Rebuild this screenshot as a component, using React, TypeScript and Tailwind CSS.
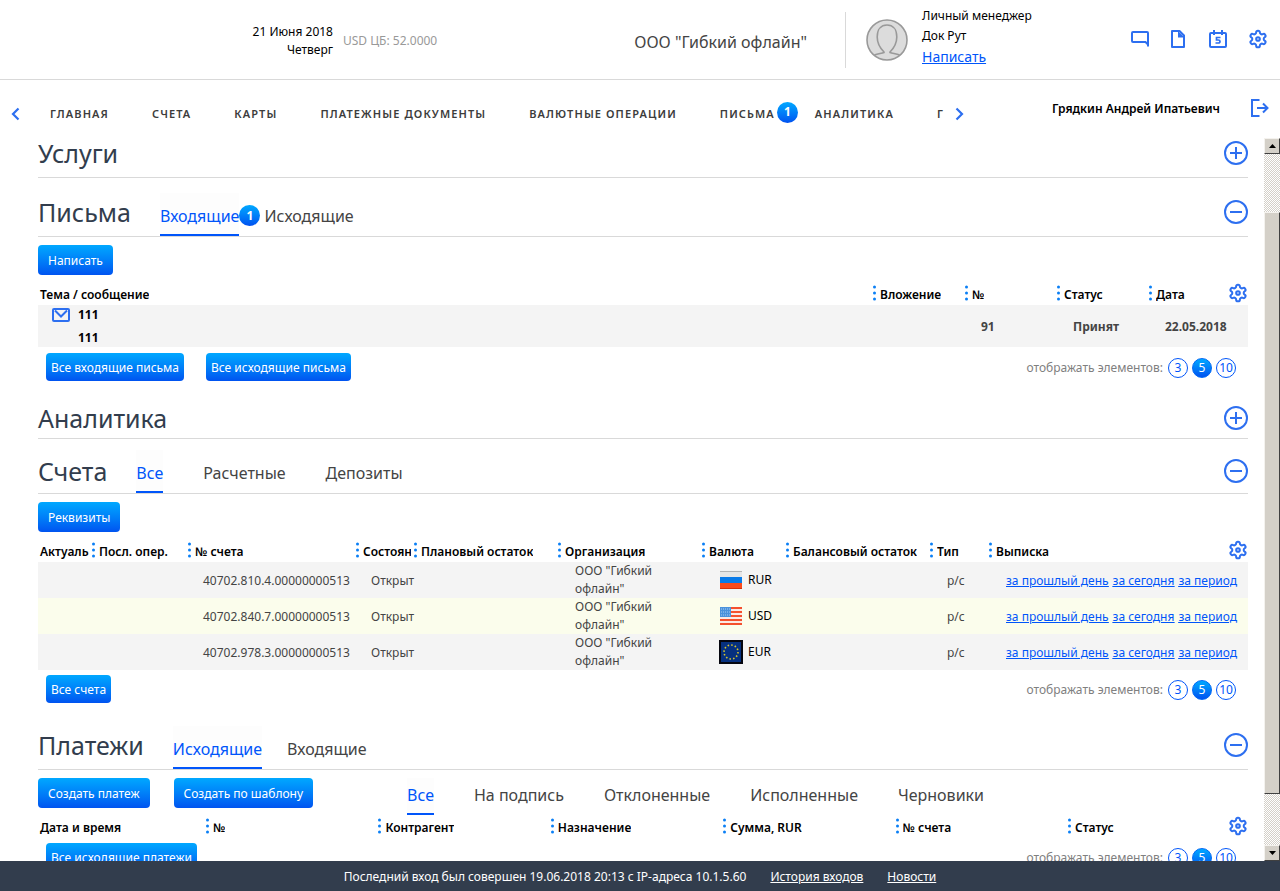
import type { ReactNode } from "react";

const pageSizes = [3, 5, 10];

const menu = [
	{ title: "ГЛАВНАЯ" },
	{ title: "СЧЕТА" },
	{ title: "КАРТЫ" },
	{ title: "ПЛАТЕЖНЫЕ ДОКУМЕНТЫ" },
	{ title: "ВАЛЮТНЫЕ ОПЕРАЦИИ" },
	{ title: "ПИСЬМА", count: 1 },
	{ title: "АНАЛИТИКА" },
	{ title: "Г" },
];

const accounts = [
	{ number: "40702.810.4.00000000513", currency: "RUR" },
	{ number: "40702.840.7.00000000513", currency: "USD" },
	{ number: "40702.978.3.00000000513", currency: "EUR" },
];

const accountColumns = [
	{ title: "Актуальность", width: "w-[54px]" },
	{ title: "Посл. опер.", width: "w-24" },
	{ title: "№ счета", width: "w-[168px]" },
	{ title: "Состояние", width: "w-[58px]" },
	{ title: "Плановый остаток", width: "w-36" },
	{ title: "Организация", width: "w-36" },
	{ title: "Валюта", width: "w-[84px]" },
	{ title: "Балансовый остаток", width: "w-36" },
	{ title: "Тип", width: "w-[59px]" },
	{ title: "Выписка", width: "" },
];

const letterColumns = [
	{ title: "Тема / сообщение", width: "" },
	{ title: "Вложение", width: "w-[92px]" },
	{ title: "№", width: "w-[92px]" },
	{ title: "Статус", width: "w-[92px]" },
	{ title: "Дата", width: "w-[99px]" },
];

const paymentColumns = [
	{ title: "Дата и время", width: "w-[168px]" },
	{ title: "№", width: "" },
	{ title: "Контрагент", width: "" },
	{ title: "Назначение", width: "" },
	{ title: "Сумма, RUR", width: "" },
	{ title: "№ счета", width: "" },
	{ title: "Статус", width: "w-[180px]" },
];

const GearIcon = () => (
	<svg width="20" height="20" viewBox="0 0 24 24" fill="none" stroke="#2d6ff0" strokeWidth="2.4">
		<path d="M12.22 2h-.44a2 2 0 0 0-2 2v.18a2 2 0 0 1-1 1.73l-.43.25a2 2 0 0 1-2 0l-.15-.08a2 2 0 0 0-2.73.73l-.22.38a2 2 0 0 0 .73 2.73l.15.1a2 2 0 0 1 1 1.72v.51a2 2 0 0 1-1 1.74l-.15.09a2 2 0 0 0-.73 2.73l.22.38a2 2 0 0 0 2.73.73l.15-.08a2 2 0 0 1 2 0l.43.25a2 2 0 0 1 1 1.73V20a2 2 0 0 0 2 2h.44a2 2 0 0 0 2-2v-.18a2 2 0 0 1 1-1.73l.43-.25a2 2 0 0 1 2 0l.15.08a2 2 0 0 0 2.73-.73l.22-.39a2 2 0 0 0-.73-2.73l-.15-.08a2 2 0 0 1-1-1.74v-.5a2 2 0 0 1 1-1.74l.15-.09a2 2 0 0 0 .73-2.73l-.22-.38a2 2 0 0 0-2.73-.73l-.15.08a2 2 0 0 1-2 0l-.43-.25a2 2 0 0 1-1-1.73V4a2 2 0 0 0-2-2z" />
		<circle cx="12" cy="12" r="2.2" />
	</svg>
);

const ChatIcon = () => (
	<svg width="20" height="20" viewBox="0 0 20 20" fill="none" stroke="#2d6ff0" strokeWidth="2">
		<path d="M18 17.5V4a1 1 0 0 0-1-1H3a1 1 0 0 0-1 1v8a1 1 0 0 0 1 1h12.500L18 15.500" />
	</svg>
);

const FileIcon = () => (
	<svg width="20" height="20" viewBox="0 0 20 20" fill="none" stroke="#2d6ff0" strokeWidth="2">
		<path d="M4 2h7.500L16 6.500V18H4z" strokeLinejoin="round" />
		<path d="M10 2v6.500h6.500z" fill="#2d6ff0" stroke="none" />
	</svg>
);

const CalendarIcon = () => (
	<svg width="20" height="20" viewBox="0 0 20 20" fill="none" stroke="#2d6ff0" strokeWidth="2">
		<rect x="2" y="4" width="16" height="14" rx="1" />
		<path d="M6 1v5M14 1v5" />
		<path d="M12.500 8.500h-4v2.500h2a1.500 1.500 0 0 1 0 3h-3" strokeWidth="1.700" />
	</svg>
);

const LogoutIcon = () => (
	<svg width="20" height="20" viewBox="0 0 20 20" fill="none" stroke="#2d6ff0" strokeWidth="2">
		<path d="M9.500 2H2v16h7.500M7 10h11M13 5.500l4.500 4.500-4.500 4.500" />
	</svg>
);

const MailIcon = () => (
	<svg width="18" height="14" viewBox="0 0 18 14" fill="none" stroke="#2d6ff0" strokeWidth="2">
		<rect x="1" y="1" width="16" height="12" rx="1" />
		<path d="m3 2.500 6 6 6-6" />
	</svg>
);

const Chevron = ({ d }: { d: string }) => (
	<svg width="9" height="14" viewBox="0 0 9 14" fill="none" stroke="#2d6ff0" strokeWidth="2.2">
		<path d={d} />
	</svg>
);

const Avatar = () => (
	<svg width="42" height="42" viewBox="0 0 42 42" fill="none" stroke="#999" strokeWidth="1.600">
		<circle cx="21" cy="21" r="20" fill="#dcdcdc" />
		<path d="M8.500 36c3.500-1.700 7-1.300 9.500-2.500v-.5c-4-4-6.800-8.500-6.800-15C11.200 10.500 15 6 21 6s9.800 4.500 9.800 12c0 6.500-2.800 11-6.800 15v.5c2.500 1.200 6 .8 9.500 2.500" />
	</svg>
);

const Flag = ({ currency }: { currency: string }) => {
	if (currency === "RUR") {
		return (
			<svg className="mx-px" width="22" height="18" viewBox="0 0 22 18">
				<rect width="22" height="6" fill="#e6e6e6" />
				<rect y="6" width="22" height="6" fill="#0a7be8" />
				<rect y="12" width="22" height="6" fill="#fb4a1c" />
				<path d="M0 .5h22" stroke="#b4b4b4" />
				<path d="M0 17.500h22" stroke="#d83208" />
			</svg>
		);
	}
	if (currency === "USD") {
		return (
			<svg className="mx-px" width="22" height="18" viewBox="0 0 22 18">
				<rect width="22" height="18" fill="#fbe9e5" />
				<path d="M0 1h22M0 5h22M0 9h22M0 13h22M0 17h22" stroke="#f4502e" strokeWidth="2" />
				<rect width="11" height="10" fill="#4b92dc" />
				<path d="M1 2h10M1 5h10M1 8h10" stroke="#a9cdf2" strokeDasharray="1 1" />
			</svg>
		);
	}
	return (
		<svg width="24" height="24" viewBox="0 0 24 24">
			<rect width="24" height="24" fill="#05060f" />
			<rect x="2" y="2" width="20" height="20" fill="#06307f" />
			<circle cx="12" cy="12" r="7" fill="none" stroke="#d8c62c" strokeWidth="1.600" strokeDasharray="1.500 2.165" />
		</svg>
	);
};

const Badge = ({ children }: { children: ReactNode }) => (
	<span className="flex size-[21px] shrink-0 items-center justify-center rounded-full bg-linear-to-b from-[#00a8ff] to-[#0050f0] text-xs font-bold tracking-normal text-white">
		{children}
	</span>
);

const ActionButton = ({ children, small }: { children: ReactNode; small?: boolean }) => (
	<button
		className={`cursor-pointer rounded-sm bg-linear-to-b from-[#00a8ff] to-[#0053f0] pt-0.5 text-xs whitespace-nowrap text-white ${
			small ? "h-7 px-[5px]" : "h-[30px] px-[10px]"
		}`}>
		{children}
	</button>
);

const Tab = ({ children, active, sub }: { children: ReactNode; active?: boolean; sub?: boolean }) => (
	<button
		className={`flex h-full cursor-pointer items-center border-b-2 text-base whitespace-nowrap ${sub ? "pb-0.5" : "pt-1"} ${
			active ? "border-[#0055fa] bg-[#fdfdfd] text-[#0055fa]" : "border-transparent text-[#444]"
		}`}>
		{children}
	</button>
);

type SectionHeadProps = { title: string; open?: boolean; size: string; lift: string; children?: ReactNode };

const SectionHead = ({ title, open, size, lift, children }: SectionHeadProps) => (
	<div className={`flex items-center border-b border-[#d9d9d9] ${size}`}>
		<h2 className={`mr-[29px] text-[25px] leading-7 text-[#323d4d] ${lift}`}>{title}</h2>
		{children}
		<button className={`ml-auto cursor-pointer ${lift}`} aria-label={title}>
			<svg width="24" height="24" viewBox="0 0 24 24" fill="none" stroke="#2d6ff0" strokeWidth="2">
				<circle cx="12" cy="12" r="11" />
				<path d={open ? "M6 12h12" : "M6 12h12M12 6v12"} />
			</svg>
		</button>
	</div>
);

const TableHead = ({ columns }: { columns: { title: string; width: string }[] }) => (
	<thead>
		<tr className="h-6">
			{columns.map((column, i) => (
				<th key={column.title} className={`p-0 text-left text-xs font-semibold text-black ${column.width}`}>
					<div className="flex items-center">
						{i > 0 && (
							<svg className="mr-1 shrink-0" width="3" height="16" viewBox="0 0 3 16" fill="#0a7ff5">
								<circle cx="1.500" cy="2" r="1.500" />
								<circle cx="1.500" cy="8" r="1.500" />
								<circle cx="1.500" cy="14" r="1.500" />
							</svg>
						)}
						<span className={`mr-[3px] overflow-hidden pt-[3px] whitespace-nowrap ${i > 0 ? "" : "pl-0.5"}`}>{column.title}</span>
						{i === columns.length - 1 && (
							<button className="ml-auto cursor-pointer" aria-label="Настройки">
								<GearIcon />
							</button>
						)}
					</div>
				</th>
			))}
		</tr>
	</thead>
);

const Pager = () => (
	<div className="ml-auto flex items-center gap-1 pt-0.5 pr-3 text-xs text-[#808080]">
		<span className="mr-px">отображать элементов:</span>
		{pageSizes.map((size) => (
			<button
				key={size}
				className={`flex size-5 cursor-pointer items-center justify-center rounded-full border ${
					size === 5 ? "border-[#0068f5] bg-linear-to-b from-[#00a8ff] to-[#0050f0] text-white" : "border-[#0055fa] text-[#0055fa]"
				}`}>
				{size}
			</button>
		))}
	</div>
);

const Header = () => (
	<header className="flex h-20 shrink-0 items-center border-b border-[#d9d9d9] text-xs">
		<div className="w-[333px] shrink-0 pt-0.5 text-right leading-[18px] text-black">
			<p>21 Июня 2018</p>
			<p>Четверг</p>
		</div>
		<span className="ml-[10px] pt-0.5 text-[#999]">USD ЦБ: 52.0000</span>
		<span className="mr-[38px] ml-auto pt-1 text-base text-[#444]">ООО "Гибкий офлайн"</span>
		<div className="flex h-14 w-[435px] shrink-0 items-center border-l border-[#d9d9d9] pr-3 pl-5">
			<Avatar />
			<div className="ml-[14px] pb-1.5 text-black">
				<p className="leading-5">Личный менеджер</p>
				<p className="leading-5">Док Рут</p>
				<a href="#write" className="block text-sm leading-[22px] text-[#0055fa] underline">
					Написать
				</a>
			</div>
			<div className="ml-auto flex items-center gap-5 pb-0.5">
				<button className="-mr-0.5 cursor-pointer" aria-label="Сообщения">
					<ChatIcon />
				</button>
				<button className="cursor-pointer" aria-label="Документы">
					<FileIcon />
				</button>
				<button className="cursor-pointer" aria-label="Календарь">
					<CalendarIcon />
				</button>
				<button className="cursor-pointer" aria-label="Настройки">
					<GearIcon />
				</button>
			</div>
		</div>
	</header>
);

const Menu = () => (
	<div className="flex h-[58px] shrink-0 items-center">
		<button className="w-[50px] shrink-0 cursor-pointer pt-2.5 pl-[11px]" aria-label="Назад">
			<Chevron d="M7.500 1.500 2 7l5.500 5.500" />
		</button>
		<nav className="flex h-full min-w-0 flex-1 items-center gap-[43px] overflow-hidden pt-2.5">
			{menu.map((item) => (
				<a key={item.title} href="#menu" className="flex shrink-0 items-center text-[11px] font-semibold tracking-widest text-[#3c3c3c]">
					{item.title}
					{item.count && (
						<span className="-mr-[26px] pb-1 pl-0.5">
							<Badge>{item.count}</Badge>
						</span>
					)}
				</a>
			))}
		</nav>
		<div className="flex w-[336px] shrink-0 items-center pr-[10px] pl-[11px]">
			<button className="cursor-pointer pt-2.5" aria-label="Вперед">
				<Chevron d="M1.500 1.500 7 7l-5.500 5.500" />
			</button>
			<span className="ml-auto text-xs font-semibold text-black">Грядкин Андрей Ипатьевич</span>
			<button className="ml-[30px] cursor-pointer pb-0.5" aria-label="Выход">
				<LogoutIcon />
			</button>
		</div>
	</div>
);

const Letters = () => (
	<section className="pt-[15px]">
		<SectionHead title="Письма" open size="h-11" lift="pb-1.5">
			<div className="flex h-full items-center gap-1">
				<div className="flex h-full items-center">
					<Tab active>Входящие</Tab>
					<span className="pt-0.5">
						<Badge>1</Badge>
					</span>
				</div>
				<Tab>Исходящие</Tab>
			</div>
		</SectionHead>
		<div className="pt-2 pb-1.5">
			<ActionButton>Написать</ActionButton>
		</div>
		<table className="w-full table-fixed text-xs">
			<TableHead columns={letterColumns} />
			<tbody>
				<tr className="h-[42px] bg-[#f4f4f4] font-bold text-[#444]">
					<td className="p-0 text-black">
						<div className="flex gap-2 pl-[14px]">
							<span className="pt-[3px]">
								<MailIcon />
							</span>
							<div>
								<p className="leading-5">111</p>
								<p className="pt-1 leading-[18px]">111</p>
							</div>
						</div>
					</td>
					<td />
					<td className="p-0 pt-0.5 pl-4">91</td>
					<td className="p-0 pt-0.5 pl-4">Принят</td>
					<td className="p-0 pt-0.5 pl-4">22.05.2018</td>
				</tr>
			</tbody>
		</table>
		<div className="flex items-center pt-1.5 pl-2">
			<ActionButton small>Все входящие письма</ActionButton>
			<span className="w-[22px]" />
			<ActionButton small>Все исходящие письма</ActionButton>
			<Pager />
		</div>
	</section>
);

const Accounts = () => (
	<section className="pt-[11px]">
		<SectionHead title="Счета" open size="h-11" lift="pb-px">
			<div className="flex h-full gap-10">
				<Tab active>Все</Tab>
				<Tab>Расчетные</Tab>
				<Tab>Депозиты</Tab>
			</div>
		</SectionHead>
		<div className="pt-2 pb-1.5">
			<ActionButton>Реквизиты</ActionButton>
		</div>
		<table className="w-full table-fixed text-xs text-[#444]">
			<TableHead columns={accountColumns} />
			<tbody>
				{accounts.map((account) => (
					<tr key={account.number} className="h-9 bg-[#f4f4f4] even:bg-[#fbfdec]">
						<td />
						<td />
						<td className="p-0 pt-0.5 pl-[15px]">{account.number}</td>
						<td className="p-0 pt-0.5 pl-[15px]">Открыт</td>
						<td />
						<td className="p-0 pr-8 pl-[17px] leading-[18px]">ООО "Гибкий офлайн"</td>
						<td className="p-0 pl-[17px] text-black">
							<div className="flex items-center gap-[5px]">
								<Flag currency={account.currency} />
								{account.currency}
							</div>
						</td>
						<td />
						<td className="p-0 pt-0.5 pl-[17px]">р/с</td>
						<td className="p-0 pt-0.5 pl-[17px] whitespace-nowrap">
							<div className="flex gap-1 text-[#0055fa] underline">
								<a href="#yesterday">за прошлый день</a>
								<a href="#today">за сегодня</a>
								<a href="#period">за период</a>
							</div>
						</td>
					</tr>
				))}
			</tbody>
		</table>
		<div className="flex items-center pt-[5px] pl-2">
			<ActionButton small>Все счета</ActionButton>
			<Pager />
		</div>
	</section>
);

const Payments = () => (
	<section className="pt-[23px]">
		<SectionHead title="Платежи" open size="h-11" lift="pb-1.5">
			<div className="flex h-full gap-[25px]">
				<Tab active>Исходящие</Tab>
				<Tab>Входящие</Tab>
			</div>
		</SectionHead>
		<div className="flex h-11 pt-2">
			<div className="flex h-[30px] w-[369px] shrink-0 gap-6">
				<ActionButton>Создать платеж</ActionButton>
				<ActionButton>Создать по шаблону</ActionButton>
			</div>
			<div className="flex h-[37px] gap-10">
				<Tab active sub>
					Все
				</Tab>
				<Tab sub>На подпись</Tab>
				<Tab sub>Отклоненные</Tab>
				<Tab sub>Исполненные</Tab>
				<Tab sub>Черновики</Tab>
			</div>
		</div>
		<table className="w-full table-fixed">
			<TableHead columns={paymentColumns} />
		</table>
		<div className="flex items-center pt-[5px] pl-2">
			<ActionButton small>Все исходящие платежи</ActionButton>
			<Pager />
		</div>
	</section>
);

const bevel = "border border-t-[#f4f2ee] border-l-[#f4f2ee] border-r-[#404040] border-b-[#404040] bg-[#d4d0c8]";

const ScrollBar = () => (
	<div className="flex w-4 shrink-0 flex-col bg-[#fff] bg-[repeating-conic-gradient(#d4d0c8_0_25%,#ffffff_0_50%)] bg-size-[2px_2px]">
		<div className={`flex h-4 items-center justify-center ${bevel}`}>
			<svg width="7" height="4" viewBox="0 0 7 4">
				<path d="M3.500 0 7 4H0z" />
			</svg>
		</div>
		<div className="grow-[58]" />
		<div className={`grow-[582] ${bevel}`} />
		<div className="grow-[51]" />
		<div className={`flex h-4 items-center justify-center ${bevel}`}>
			<svg width="7" height="4" viewBox="0 0 7 4">
				<path d="M0 0h7L3.500 4z" />
			</svg>
		</div>
	</div>
);

const App = () => {
	return (
		<div className="flex h-screen flex-col bg-white font-['Noto_Sans','Open_Sans',sans-serif]">
			<Header />
			<Menu />
			<div className="flex min-h-0 flex-1">
				<main className="min-w-0 flex-1 overflow-hidden pr-4 pl-[38px]">
					<SectionHead title="Услуги" size="h-10" lift="pb-2.5" />
					<Letters />
					<section className="pt-[18px]">
						<SectionHead title="Аналитика" size="h-10" lift="pb-px" />
					</section>
					<Accounts />
					<Payments />
				</main>
				<ScrollBar />
			</div>
			<footer className="flex h-[30px] shrink-0 items-center justify-center gap-6 bg-[#323d4d] pt-0.5 text-xs text-white">
				<span>Последний вход был совершен 19.06.2018 20:13 с IP-адреса 10.1.5.60</span>
				<a href="#history" className="underline">
					История входов
				</a>
				<a href="#news" className="underline">
					Новости
				</a>
			</footer>
		</div>
	);
};

export default App;
